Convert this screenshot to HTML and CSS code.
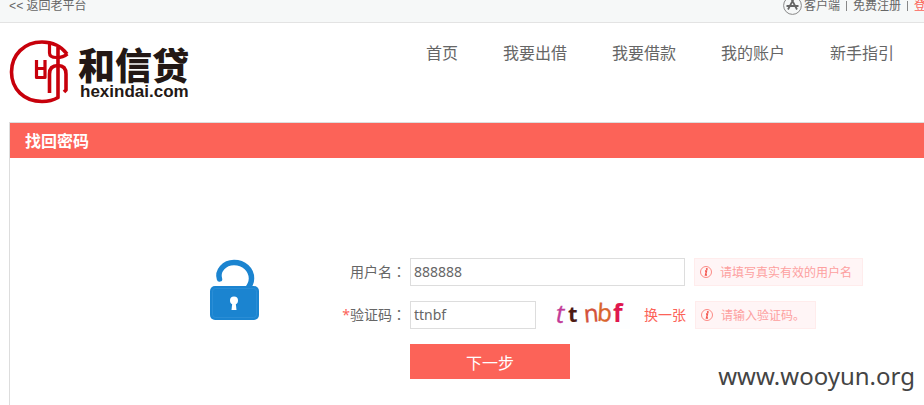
FILE: index.html
```html
<!DOCTYPE html>
<html lang="zh-CN">
<head>
<meta charset="utf-8">
<title>找回密码</title>
<link rel="stylesheet" href="styles.css">
</head>
<body>
<div class="topbar">
  <a class="back" href="#"><span class="arrows">&lt;&lt;</span>返回老平台</a>
  <div class="top-links">
    <a class="client" href="#">
      <svg width="19" height="19" viewBox="0 0 19 19" fill="none" stroke="#666"><circle cx="9.500" cy="8.500" r="8.900" stroke="#888"/><path d="M10.300 2.500 5 12.500M8.700 2.500l5.300 10M3.500 9h12" stroke-width="1.800"/></svg>
      客户端</a>
    <i class="sep"></i>
    <a href="#">免费注册</a>
    <i class="sep"></i>
    <a class="login" href="#">登录</a>
  </div>
</div>

<header class="header">
  <a class="logo" href="#">
    <svg width="60" height="64" viewBox="0 0 60 64" fill="none" stroke="#c7000b" stroke-linejoin="round">
      <path d="M58 14C52 6 43 2 33 2 15 2 2.500 15 2.500 32S15 61.500 33 61.500c6 0 11-1 16-4V6" stroke-width="3.600"/>
      <path d="M40.500 4v9c0 3 2 4.500 7 4.500 4 0 8-1 11-3.500" stroke-width="3.200"/>
      <path d="M40.500 53V34c0-6 3-8.500 8.500-8.500s8 3 8 8.500v16l-2 2" stroke-width="3.600"/>
      <path d="M27.500 20v17.500h8.500V20M27.500 28.500h8.500" stroke-width="3.200"/>
    </svg>
    <span class="brand"><span class="brand-cn">和信贷</span><span class="brand-en">hexindai.com</span></span>
  </a>
  <nav class="nav">
    <a href="#">首页</a>
    <a href="#">我要出借</a>
    <a href="#">我要借款</a>
    <a href="#">我的账户</a>
    <a href="#">新手指引</a>
  </nav>
</header>

<main class="panel">
  <h1 class="panel-title">找回密码</h1>
  <div class="panel-body">
    <svg class="lock" width="50" height="62" viewBox="0 0 50 62">
      <path d="M9.500 21C7 13 14 4.500 24 4.500c10 0 17.500 7 17.500 16 0 4-1.500 7-4.500 11" fill="none" stroke="#1b84d0" stroke-width="5.500" stroke-linecap="round"/>
      <rect y="28" width="49" height="34" rx="5" fill="#1b84d0"/>
      <rect x="2.500" y="30.500" width="44" height="29" rx="3" fill="none" stroke="#3593d8" stroke-width=".6"/>
      <circle cx="24" cy="42.500" r="4" fill="#fff"/><path d="M22.500 43h3l1 9h-5z" fill="#fff"/>
    </svg>
    <form class="form">
      <div class="row">
        <label class="label" for="user">用户名<span class="colon" lang="zh-TW">：</span></label>
        <input class="field field-wide" id="user" type="text" value="888888">
        <p class="tip">
          <svg width="12" height="12" viewBox="0 0 12 12"><circle cx="6" cy="6" r="5.500" fill="none" stroke="#fb8a85"/><path d="M5 5h1.500L5.500 9H7" fill="none" stroke="#f4564e" stroke-width="1.400"/><circle cx="6.800" cy="3" r="1" fill="#f4564e"/></svg>
          请填写真实有效的用户名</p>
      </div>
      <div class="row">
        <label class="label" for="code"><span class="star">*</span>验证码<span class="colon" lang="zh-TW">：</span></label>
        <input class="field field-code" id="code" type="text" value="ttnbf">
        <svg class="captcha" width="80" height="28" viewBox="0 0 80 28">
          <rect width="80" height="28" fill="#fdfeff"/>
          <g font-family="Open Sans, sans-serif">
            <text x="6" y="22" font-size="25" font-style="italic" fill="#c23a98" stroke="#c23a98" stroke-width=".4">t</text>
            <text x="18" y="21" font-size="22" font-weight="700" fill="#4c1a14">t</text>
            <text x="34" y="21" font-size="24" fill="#d3513b" stroke="#d3513b" stroke-width=".4" transform="rotate(-5 40 15)">n</text>
            <text x="47" y="20" font-size="24" fill="#d9642d" stroke="#d9642d" stroke-width=".4" transform="rotate(4 52 15)">b</text>
            <text x="63" y="21" font-size="25" font-weight="700" fill="#df174f">f</text>
          </g>
        </svg>
        <a class="refresh" href="#">换一张</a>
        <p class="tip">
          <svg width="12" height="12" viewBox="0 0 12 12"><circle cx="6" cy="6" r="5.500" fill="none" stroke="#fb8a85"/><path d="M5 5h1.500L5.500 9H7" fill="none" stroke="#f4564e" stroke-width="1.400"/><circle cx="6.800" cy="3" r="1" fill="#f4564e"/></svg>
          请输入验证码。</p>
      </div>
      <button class="next" type="button">下一步</button>
    </form>
  </div>
</main>
<div class="watermark">www.wooyun.org</div>
</body>
</html>
```
FILE: styles.css
```css
* { box-sizing: border-box; }
body {
  margin: 0;
  position: relative;
  min-height: 100vh;
  background: #fff;
  color: #666;
  font-family: "Noto Sans", "Noto Sans CJK SC", sans-serif;
  font-size: 14px;
  display: flex;
  flex-direction: column;
}
a { color: inherit; text-decoration: none; }
p { margin: 0; }
svg { flex: none; display: block; }

.topbar {
  height: 23px;
  padding-left: 9px;
  display: flex;
  justify-content: space-between;
  overflow: hidden;
  background: #f6f8f8;
  border-bottom: 1px solid #e3e3e3;
  font-size: 12px;
  line-height: 12px;
  white-space: nowrap;
}
.arrows { font-family: "Liberation Mono", monospace; margin-right: 3px; }
.top-links {
  display: flex;
  align-items: center;
  height: 12px;
  gap: 6px;
  margin-right: -14px;
}
.client { display: flex; align-items: center; gap: 2px; }
.sep { width: 1px; height: 10px; background: #888; }
.login { color: #fc6358; }

.header {
  display: flex;
  justify-content: space-between;
  align-items: flex-start;
  padding: 17px 30px 0 9px;
  height: 99px;
}
.logo { display: flex; gap: 9px; color: #231815; }
.brand { display: flex; flex-direction: column; padding-top: 6px; }
.brand-cn { font-size: 37px; font-weight: 900; line-height: 36px; font-family: "Noto Sans CJK SC", sans-serif; }
.brand-en { font-size: 17px; font-weight: 700; line-height: 20px; padding-left: 2px; font-family: "Liberation Sans", sans-serif; }
.nav { display: flex; gap: 45px; font-size: 16px; line-height: 26px; }

.panel {
  flex: 1;
  margin-left: 9px;
  border: solid #ddd;
  border-width: 1px 0 0 1px;
}
.panel-title {
  margin: 0;
  padding-left: 15px;
  background: #fc6358;
  color: #fff;
  font-size: 16px;
  line-height: 36px;
  height: 35px;
}
.panel-body { display: flex; padding: 100px 0 26px 200px; }
.lock { margin-right: 76px; }
.form { display: flex; flex-direction: column; gap: 15px; }
.row { display: flex; align-items: center; height: 28px; white-space: nowrap; }
.label { width: 74px; padding-right: 4px; text-align: right; line-height: 26px; height: 28px; }
.colon { font-family: "Noto Sans CJK TC", sans-serif; }
.star { color: #fc6358; }
.field {
  height: 28px;
  padding: 0 3px 2px;
  border: 1px solid #ddd;
  background: #fff;
  color: #666;
  font: inherit;
}
.field-wide { width: 275px; }
.field-code { width: 126px; }
.captcha { margin: 0 14px; }
.refresh { color: #fc6358; line-height: 28px; }
.tip {
  display: flex;
  align-items: center;
  gap: 8px;
  height: 28px;
  margin-left: 9px;
  padding: 0 10px 0 5px;
  border: 1px solid #ffecec;
  background: #fff5f6;
  color: #fda09f;
  font-size: 12px;
}
.next {
  width: 160px;
  height: 35px;
  margin-left: 74px;
  padding: 0;
  border: 0;
  background: #fc6358;
  color: #fff;
  font: inherit;
  font-size: 16px;
}
.watermark {
  position: absolute;
  right: 9px;
  bottom: 12px;
  color: #444;
  font-size: 24px;
  line-height: 34px;
}
```
